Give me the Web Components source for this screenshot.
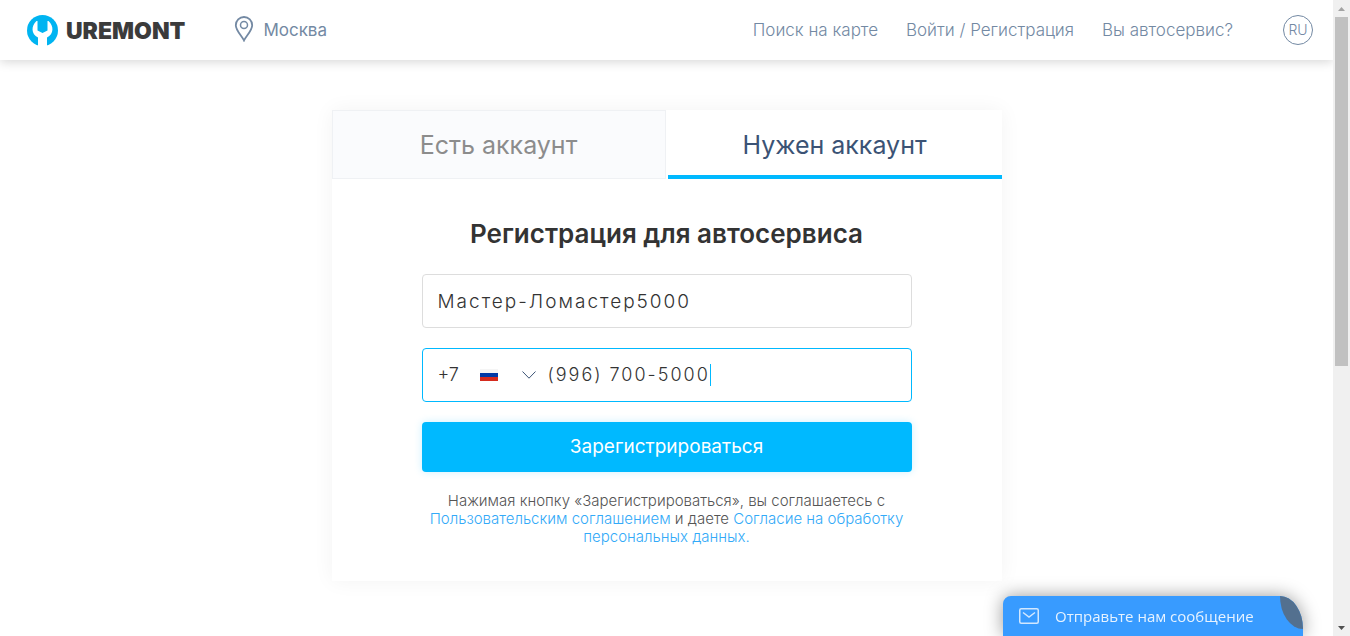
<!DOCTYPE html>
<html lang="ru">
<head>
<meta charset="utf-8">
<title>Uremont — регистрация</title>
<style>
  body { margin: 0; background: #fff; font-family: Inter, "Open Sans", sans-serif; color: #333; }
</style>
</head>
<body>
<uremont-app></uremont-app>
<script>
const define = (name, html) => {
  const template = document.createElement('template');
  template.innerHTML = html;
  customElements.define(name, class extends HTMLElement {
    constructor() {
      super();
      this.attachShadow({ mode: 'open' }).append(template.content.cloneNode(true));
    }
  });
};

define('site-logo', `
<style>
  :host { display: block; }
  a { display: flex; align-items: center; gap: 7px; color: #3b3b3b; text-decoration: none; font-size: 23px; line-height: 32px; font-weight: 900; }
  svg { display: block; }
  span { padding-top: 2px; }
</style>
<a href="#" aria-label="Uremont">
  <svg width="32" height="32" viewBox="0 0 32 32" aria-hidden="true">
    <circle cx="15.500" cy="16.500" r="15.500" fill="#00b4f1"/>
    <path d="M10.500 7 H9.500 C4 12 4 20 11 23.500 V32 H20 V23.500 C27 20 27 12 21.500 7 H20.500 V16.500 L15.500 19 L10.500 16.500 Z" fill="#fff"/>
  </svg>
  <span>UREMONT</span>
</a>`);

define('city-picker', `
<style>
  :host { display: block; }
  a { display: flex; align-items: center; gap: 9px; color: #7389a3; text-decoration: none; font-size: 17px; line-height: 20px; }
  svg { display: block; margin-bottom: 2px; }
</style>
<a href="#">
  <svg width="20" height="26" viewBox="0 0 20 26" fill="none" stroke="#7389a3" aria-hidden="true">
    <path d="M10 24.500 C8 20 1.800 14.500 1.800 9.200 A8.200 8.200 0 0 1 18.200 9.200 C18.200 14.500 12 20 10 24.500 Z" stroke-width="1.800"/>
    <circle cx="10" cy="9" r="3.500" stroke-width="1.500"/>
  </svg>
  <slot></slot>
</a>`);

define('site-header', `
<style>
  :host { display: flex; align-items: center; height: 60px; padding: 0 20px 0 27px; box-sizing: border-box; background: #fff; box-shadow: 0 2px 10px rgba(0,0,0,.16); }
  city-picker { margin-left: 49px; }
  nav { display: flex; gap: 28px; margin-left: auto; font-size: 17px; line-height: 20px; font-weight: 300; }
  nav a { color: #7389a3; text-decoration: none; }
  button { width: 30px; height: 30px; margin-left: 50px; padding: 0; border: 1px solid #7389a3; border-radius: 50%; background: none; color: #7389a3; font: 300 14px/28px Inter, sans-serif; }
</style>
<site-logo></site-logo>
<city-picker>Москва</city-picker>
<nav>
  <a href="#">Поиск на карте</a>
  <a href="#">Войти / Регистрация</a>
  <a href="#">Вы автосервис?</a>
</nav>
<button type="button">RU</button>`);

define('account-tabs', `
<style>
  :host { display: grid; grid-template-columns: 1fr 1fr; gap: 2px; }
  button { height: 69px; padding: 0; border: 1px solid #eff1f4; background: #fafbfd; color: #8c8c8c; font: 400 25px/30px Inter, sans-serif; }
  button[aria-selected=true] { border: 0; border-top: 4px solid transparent; border-bottom: 4px solid #00b9ff; background: #fff; color: #3b5375; }
</style>
<button type="button" role="tab" aria-selected="false">Есть аккаунт</button>
<button type="button" role="tab" aria-selected="true">Нужен аккаунт</button>`);

define('phone-field', `
<style>
  :host { display: flex; align-items: center; height: 54px; box-sizing: border-box; padding: 0 15px; border: 1px solid #00b9ff; border-radius: 4px; font-size: 18px; font-weight: 300; line-height: 24px; letter-spacing: 2px; }
  .code { width: 42px; letter-spacing: 0; }
  .country { display: flex; align-items: center; gap: 24px; margin-right: 12px; padding: 0; border: 0; background: none; }
  svg { display: block; }
  input { field-sizing: content; min-width: 0; padding: 0; border: 0; outline: 0; background: none; color: inherit; font: inherit; letter-spacing: inherit; }
  .caret { flex: none; width: 1px; height: 22px; background: #00b9ff; }
</style>
<label class="code" for="phone">+7</label>
<button class="country" type="button" aria-label="Россия">
  <svg width="18" height="12" viewBox="0 0 18 12" aria-hidden="true"><path fill="#f5f5f5" d="M0 0h18v4H0z"/><path fill="#0039a6" d="M0 4h18v4H0z"/><path fill="#d52b1e" d="M0 8h18v4H0z"/></svg>
  <svg width="14" height="8" viewBox="0 0 14 8" fill="none" stroke="#3b5375" aria-hidden="true"><path d="M.500.500 7 7.200 13.500.500"/></svg>
</button>
<input id="phone" type="tel" size="14" value="(996) 700-5000">
<span class="caret"></span>`);

define('register-form', `
<style>
  :host { display: block; }
  form { display: grid; gap: 20px; }
  h1 { margin: 0 0 4px; font-size: 26px; line-height: 32px; font-weight: 600; text-align: center; color: #333; }
  input { width: 100%; height: 54px; box-sizing: border-box; padding: 0 15px; border: 1px solid #ddd; border-radius: 4px; color: #333; font: 300 19px/24px Inter, sans-serif; letter-spacing: 2px; }
  button { height: 50px; border: 0; border-radius: 4px; background: #00b9ff; color: #fff; font: 400 19px/24px Inter, sans-serif; box-shadow: 0 0 8px rgba(0,185,255,.2); }
  p { margin: 0; font-size: 15px; line-height: 18px; font-weight: 300; text-align: center; color: #555; }
  a { color: #33aaf8; text-decoration: none; }
</style>
<form>
  <h1>Регистрация для автосервиса</h1>
  <input type="text" aria-label="Название автосервиса" value="Мастер-Ломастер5000">
  <phone-field></phone-field>
  <button type="button">Зарегистрироваться</button>
  <p>Нажимая кнопку «Зарегистрироваться», вы соглашаетесь с <a href="#">Пользовательским соглашением</a> и даете <a href="#">Согласие на обработку персональных данных.</a></p>
</form>`);

define('account-card', `
<style>
  :host { display: block; width: 100%; max-width: 670px; background: #fff; box-shadow: 0 0 20px rgba(0,0,0,.05); }
  register-form { max-width: 490px; margin: 0 auto; padding: 39px 0 35px; }
</style>
<account-tabs role="tablist"></account-tabs>
<register-form></register-form>`);

define('chat-launcher', `
<style>
  :host { position: fixed; right: 47px; bottom: 0; width: 300px; height: 40px; }
  button { display: flex; align-items: center; gap: 16px; width: 100%; height: 100%; padding: 0 16px; border: 0; border-radius: 8px 23px 0 0 / 8px 33px 0 0; background: #389bff; color: #e6f2ff; font: 400 15px/24px "Open Sans", sans-serif; box-shadow: 0 0 18px rgba(0,0,0,.4); }
  .fold { position: absolute; top: 0; right: 0; width: 23px; height: 33px; border-radius: 0 100% 0 100%; background: #53708f; }
</style>
<button type="button">
  <svg width="20" height="16" viewBox="0 0 20 16" fill="none" stroke="#d2e8ff" stroke-width="1.500" aria-hidden="true"><rect x=".750" y=".750" width="18.500" height="14.500" rx="1.500"/><path d="M4 4.500 10 9 16 4.500"/></svg>
  <span>Отправьте нам сообщение</span>
</button>
<span class="fold"></span>`);

define('page-scrollbar', `
<style>
  :host { display: grid; grid-template-rows: 17px 1fr 17px; justify-items: center; box-sizing: border-box; position: sticky; top: 0; height: 100vh; background: #f0f0f0; }
  svg { display: block; align-self: center; }
  .thumb { width: 13px; height: 58%; background: #c1c1c1; }
</style>
<svg width="7" height="4" viewBox="0 0 7 4"><path fill="#a3a3a3" d="M0 4 3.500 0 7 4z"/></svg>
<div class="thumb"></div>
<svg width="7" height="4" viewBox="0 0 7 4"><path fill="#505050" d="M0 0 3.500 4 7 0z"/></svg>`);

define('uremont-app', `
<style>
  :host { display: grid; grid-template-columns: minmax(0, 1fr) 17px; min-height: 100vh; }
  .page { overflow: hidden; }
  main { display: flex; justify-content: center; padding: 50px 20px 40px; }
</style>
<div class="page">
  <site-header></site-header>
  <main><account-card></account-card></main>
</div>
<page-scrollbar aria-hidden="true"></page-scrollbar>
<chat-launcher></chat-launcher>`);
</script>
</body>
</html>
